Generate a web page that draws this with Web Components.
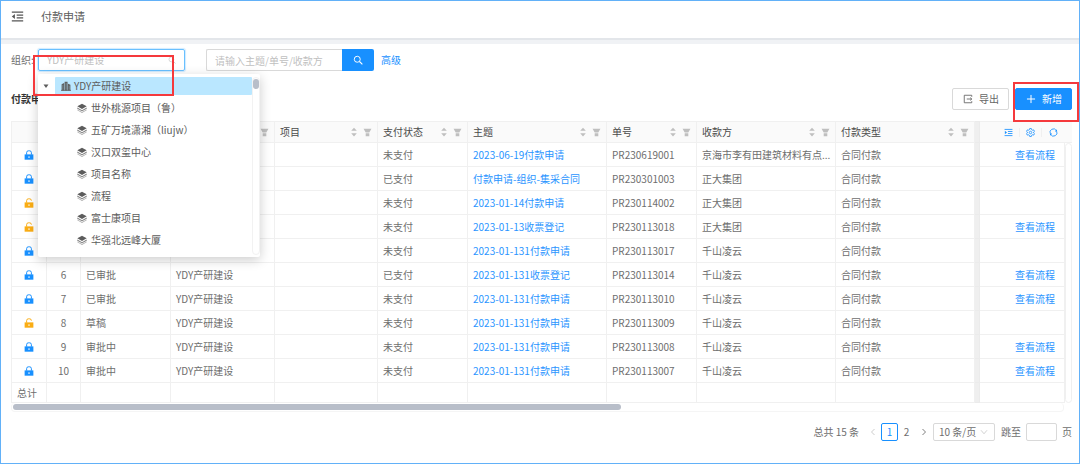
<!DOCTYPE html>
<html lang="zh-CN">
<head>
<meta charset="utf-8">
<meta name="viewport" content="width=device-width, initial-scale=1">
<title>付款申请</title>
<style>
  body {
    margin: 0;
    font: 10px/16px "Noto Sans CJK SC", "Open Sans", sans-serif;
    color: #6e6e6e;
    background: #fff;
  }
</style>
</head>
<body>
<payment-page></payment-page>

<script>
const ICONS = {
  fold: '<path d="M1 2.5h14M7 6.2h8M7 9.8h8M1 13.5h14" fill="none" stroke="currentColor" stroke-width="1.5"/><path d="M4.8 5v6L1 8z"/>',
  search: '<circle cx="6.8" cy="6.8" r="4.8" fill="none" stroke="currentColor" stroke-width="1.5"/><path d="M10.4 10.4l4.6 4.6" stroke="currentColor" stroke-width="1.7"/>',
  lock: '<path d="M1 7h14v8.5H1z"/><path d="M4.200 7.500V4.200Q4.200 1.300 7 1.300h2q2.800 0 2.800 2.900v3.300" fill="none" stroke="currentColor" stroke-width="1.600"/><path d="M7.200 9.800h1.600v2.900H7.200z" fill="#fff"/>',
  unlock: '<path d="M1 7h14v8.500H1z"/><path d="M4.200 7.500V4.200Q4.200 1.300 7 1.300h2q2.800 0 2.800 2.900" fill="none" stroke="currentColor" stroke-width="1.600"/><path d="M7.200 9.800h1.600v2.900H7.200z" fill="#fff"/>',
  filter: '<path d="M1 1.500h14L11.200 8H4.800zM4.800 9.500h6.400v5H4.800z"/>',
  sort: '<path d="M8 1l4.500 5h-9zM8 15l4.500-5h-9z"/>',
  building: '<path d="M1 5l4-2v12H1zM5.800 1h4.700v14H5.800zM11.200 4.500L15 6v9h-3.800z"/><path d="M0 14.200h16V15.500H0z"/><path d="M3 6v8M8.200 3v11M13.100 7.500V14" stroke="#9cc5d8" stroke-width=".7"/>',
  layers: '<path d="M8 1l7.500 4.300L8 9.600.5 5.300z"/><path d="M.5 7.300L8 11.600l7.500-4.300v1.800L8 13.300.5 9.100z" opacity=".8"/><path d="M.5 10.200L8 14.400l7.500-4.200v1.400L8 15.800.5 11.600z" opacity=".5"/>',
  caret: '<path d="M3 5h10l-5 7z"/>',
  plus: '<path d="M8 1.500v13M1.500 8h13" stroke="currentColor" stroke-width="1.600"/>',
  exportBox: '<path d="M14 4.500V2H2v12h12v-2.500M6 8h8M11.500 5.800L14 8l-2.500 2.200" fill="none" stroke="currentColor" stroke-width="1.400"/>',
  indent: '<path d="M1 2.500h14M7 6.200h8M7 9.800h8M1 13.500h14" fill="none" stroke="currentColor" stroke-width="1.500"/><path d="M1.500 5v6l3.800-3z"/>',
  gear: '<path d="M6.500 1h3l.5 2 1.500.9 2-.6L15 6l-1.500 1.300v1.400L15 10l-1.500 2.700-2-.6-1.500.9-.5 2h-3L6 13l-1.500-.9-2 .6L1 10l1.500-1.300V7.300L1 6l1.500-2.700 2 .6L6 3z" fill="none" stroke="currentColor" stroke-width="1.500"/><circle cx="8" cy="8" r="2.200" fill="none" stroke="currentColor" stroke-width="1.400"/>',
  reload: '<path d="M2.300 10A6 6 0 0 1 13 4.600M13.700 6A6 6 0 0 1 3 11.400" fill="none" stroke="currentColor" stroke-width="1.500"/><path d="M14.200 2.200v4h-3.800zM1.800 13.800v-4h3.800z"/>',
  left: '<path d="M11 2L5 8l6 6" fill="none" stroke="currentColor" stroke-width="1.600"/>',
  right: '<path d="M5 2l6 6-6 6" fill="none" stroke="currentColor" stroke-width="1.800"/>',
  down: '<path d="M2 4.500l6 7 6-7" fill="none" stroke="currentColor" stroke-width="1.400"/>'
};

class UiIcon extends HTMLElement {
  connectedCallback() {
    if (this.shadowRoot) return;
    this.attachShadow({ mode: 'open' });
    this.shadowRoot.innerHTML = `
      <style>
        :host { display: inline-block; flex: none; width: 10px; height: 10px; }
        svg { display: block; width: 100%; height: 100%; fill: currentColor; }
      </style>
      <svg viewBox="0 0 16 16" aria-hidden="true">${ICONS[this.getAttribute('name')]}</svg>
    `;
  }
}

class PageHeader extends HTMLElement {
  constructor() {
    super();
    this.attachShadow({ mode: 'open' });
    this.shadowRoot.innerHTML = `
      <style>
        :host { display: block; }
        header { display: flex; align-items: center; gap: 17px; height: 30px; padding: 0 10px 7px; }
        button { display: flex; padding: 0; border: 0; background: none; color: #555; }
        ui-icon { width: 13px; height: 13px; }
        h1 { margin: 0; font-size: 11px; font-weight: 400; line-height: 16px; color: #5c5c5c; }
        .band { height: 4px; border-top: 2px solid #e3e6ea; background: #f0f2f5; }
      </style>
      <header>
        <button type="button" aria-label="收起菜单"><ui-icon name="fold"></ui-icon></button>
        <h1><slot></slot></h1>
      </header>
      <div class="band"></div>
    `;
  }
}

class UiButton extends HTMLElement {
  constructor() {
    super();
    this.attachShadow({ mode: 'open' });
    this.shadowRoot.innerHTML = `
      <style>
        :host { display: block; }
        button {
          display: flex; align-items: center; justify-content: center; gap: 6px;
          box-sizing: border-box; height: 22px; padding: 0 9px 0 10px;
          border: 1px solid #d9d9d9; border-radius: 2px;
          background: #fff; color: #666; font: inherit;
        }
        :host([primary]) button { border-color: #1890ff; background: #1890ff; color: #fff; }
      </style>
      <button type="button"><slot></slot></button>
    `;
  }
}

class OrgTree extends HTMLElement {
  constructor() {
    super();
    const items = ['世外桃源项目（鲁）', '五矿万境潇湘（liujw）', '汉口双玺中心', '项目名称', '流程', '富士康项目', '华强北远峰大厦'];
    this.attachShadow({ mode: 'open' });
    this.shadowRoot.innerHTML = `
      <style>
        :host {
          display: flex; box-sizing: border-box; padding: 3px 0 2px 4px;
          background: #fff; border-radius: 2px; color: #5c5c5c;
          box-shadow: 0 3px 12px rgba(0, 0, 0, .2);
        }
        ul { flex: 1; margin: 0; padding: 0; list-style: none; }
        li { display: flex; align-items: center; height: 18px; margin-bottom: 4px; }
        li:last-child { margin-bottom: 6px; }
        .caret { width: 8px; height: 8px; margin-right: 5px; }
        .root { flex: 1; display: flex; align-items: center; gap: 3px; height: 18px; padding-left: 6px; border-radius: 1px; background: #bae7ff; }
        .child { padding-left: 35px; gap: 4px; }
        .bar { box-sizing: border-box; width: 8px; padding-top: 1px; border: 1px solid #f2f2f2; border-radius: 4px; }
        .bar i { display: block; height: 10px; border-radius: 3px; background: #b8bec9; }
      </style>
      <ul role="tree">
        <li role="treeitem" aria-selected="true"><ui-icon class="caret" name="caret"></ui-icon><span class="root"><ui-icon name="building"></ui-icon>YDY产研建设</span></li>
        ${items.map(t => `<li class="child" role="treeitem"><ui-icon name="layers"></ui-icon><span>${t}</span></li>`).join('')}
      </ul>
      <div class="bar"><i></i></div>
    `;
  }
}

class OrgSelect extends HTMLElement {
  constructor() {
    super();
    this.attachShadow({ mode: 'open' });
    this.shadowRoot.innerHTML = `
      <style>
        :host { display: flex; align-items: center; }
        label { width: 27px; white-space: nowrap; }
        .field { position: relative; width: 147px; }
        .box {
          display: flex; align-items: center; box-sizing: border-box; height: 22px; padding: 0 8px;
          border: 1px solid #69c0ff; border-radius: 2px; box-shadow: 0 0 1px 1px #cfeaff; color: #ccc;
        }
        input { flex: 1; min-width: 0; padding: 0; border: 0; outline: 0; background: none; font: inherit; color: #555; }
        input::placeholder { color: #bfbfbf; }
        ui-icon { width: 8px; height: 8px; }
        org-tree { position: absolute; z-index: 2; top: 25px; left: 0; width: 222px; }
        .mark { position: absolute; z-index: 3; top: 6px; left: -5px; box-sizing: border-box; width: 141px; height: 41px; border: 2px solid #f5393c; pointer-events: none; }
      </style>
      <label for="org">组织:</label>
      <div class="field">
        <div class="box"><input id="org" placeholder="YDY产研建设"><ui-icon name="search"></ui-icon></div>
        <org-tree></org-tree>
        <div class="mark"></div>
      </div>
    `;
  }
}

class SearchBox extends HTMLElement {
  constructor() {
    super();
    this.attachShadow({ mode: 'open' });
    this.shadowRoot.innerHTML = `
      <style>
        :host { display: flex; align-items: center; }
        input {
          box-sizing: border-box; width: 136px; height: 22px; padding: 0 8px; outline: 0;
          border: 1px solid #d9d9d9; border-right: 0; border-radius: 2px 0 0 2px; font: inherit;
        }
        input::placeholder { color: #bfbfbf; }
        button { display: flex; align-items: center; justify-content: center; width: 32px; height: 22px; padding: 0; border: 0; border-radius: 0 2px 2px 0; background: #1890ff; color: #fff; }
        a { margin-left: 7px; color: #1890ff; text-decoration: none; }
      </style>
      <input aria-label="搜索" placeholder="请输入主题/单号/收款方">
      <button type="button" aria-label="搜索"><ui-icon name="search"></ui-icon></button>
      <a href="#">高级</a>
    `;
  }
}

// lock, no., approval, org, project, pay state, subject, code, payee, type, has flow link
const ROWS = [
  ['lock', '', '', '', '', '未支付', '2023-06-19付款申请', 'PR230619001', '京海市李有田建筑材料有点...', '合同付款', 1],
  ['lock', '', '', '', '', '已支付', '付款申请-组织-集采合同', 'PR230301003', '正大集团', '合同付款', 0],
  ['unlock', '', '', '', '', '未支付', '2023-01-14付款申请', 'PR230114002', '正大集团', '合同付款', 0],
  ['unlock', '', '', '', '', '未支付', '2023-01-13收票登记', 'PR230113018', '正大集团', '合同付款', 1],
  ['lock', '', '', '', '', '未支付', '2023-01-131付款申请', 'PR230113017', '千山凌云', '合同付款', 0],
  ['lock', '6', '已审批', 'YDY产研建设', '', '已支付', '2023-01-131收票登记', 'PR230113014', '千山凌云', '合同付款', 1],
  ['lock', '7', '已审批', 'YDY产研建设', '', '未支付', '2023-01-131付款申请', 'PR230113010', '千山凌云', '合同付款', 1],
  ['unlock', '8', '草稿', 'YDY产研建设', '', '未支付', '2023-01-131付款申请', 'PR230113009', '千山凌云', '合同付款', 0],
  ['lock', '9', '审批中', 'YDY产研建设', '', '未支付', '2023-01-131付款申请', 'PR230113008', '千山凌云', '合同付款', 1],
  ['lock', '10', '审批中', 'YDY产研建设', '', '未支付', '2023-01-131付款申请', 'PR230113007', '千山凌云', '合同付款', 1]
];
const WIDTHS = [35, 34, 90, 104, 103, 90, 139, 90, 139, 139, 5, 85];
const HEADS = ['', '项目', '支付状态', '主题', '单号', '收款方', '付款类型'];

class PaymentTable extends HTMLElement {
  constructor() {
    super();
    this.attachShadow({ mode: 'open' });
    this.shadowRoot.innerHTML = `
      <style>
        :host { display: block; }
        .wrap { display: flex; }
        table { flex: 1; min-width: 0; width: 100%; border-collapse: separate; border-spacing: 0; table-layout: fixed; border-left: 1px solid #f0f0f0; }
        th, td { box-sizing: border-box; padding: 0 5px; border: solid #f0f0f0; border-width: 0 1px 1px 0; text-align: left; font-weight: 400; white-space: nowrap; overflow: hidden; }
        th { height: 22px; border-top-width: 1px; background: #fafafa; color: #4a4a4a; }
        td { height: 24px; }
        tfoot td { height: 20px; overflow: visible; }
        .head { display: flex; align-items: center; gap: 4px; }
        .head span { flex: 1; }
        .head ui-icon { color: #bfbfbf; }
        .head ui-icon[name=filter] { width: 9px; height: 9px; }
        .num { text-align: center; padding: 0; }
        td ui-icon { display: block; margin: auto; color: #1890ff; }
        td ui-icon[name=unlock] { color: #faad14; }
        a { color: #2b95ff; text-decoration: none; }
        .edge { padding: 0; background: #efefef; border-color: #ebebeb; }
        .flow { text-align: right; padding-right: 9px; }
        .tools { display: flex; justify-content: flex-end; }
        th.tool-cell { padding-right: 1px; border-right: 0; }
        .tools button { display: flex; justify-content: center; width: 22px; padding: 0; border: 0; border-right: 1px solid #f0f0f0; background: none; color: #1890ff; }
        .tools button:last-child { border: 0; }
        .tools ui-icon { width: 9px; height: 9px; }
        .gutter { display: flex; flex-direction: column; width: 8px; }
        .cap { box-sizing: border-box; height: 22px; border: solid #f0f0f0; border-width: 1px 0; background: #fafafa; }
        .track { flex: 1; border: 1px solid #f0f0f0; border-radius: 4px; }
        .scroll { box-sizing: border-box; height: 9px; margin-right: 8px; padding: 1px 1px 0; border: solid #f5f5f5; border-width: 0 1px 1px; border-radius: 4px; }
        .scroll i { display: block; width: 58%; height: 6px; border-radius: 3px; background: #b8bec9; }
      </style>
      <div class="wrap">
        <table>
          <colgroup>${WIDTHS.map(w => `<col style="width:${w}px">`).join('')}</colgroup>
          <thead><tr>
            <th></th><th></th><th></th>
            ${HEADS.map(h => `<th><div class="head"><span>${h}</span><ui-icon name="sort"></ui-icon><ui-icon name="filter"></ui-icon></div></th>`).join('')}
            <th class="edge"></th>
            <th class="tool-cell"><div class="tools">
              <button type="button" aria-label="密度"><ui-icon name="indent"></ui-icon></button>
              <button type="button" aria-label="设置"><ui-icon name="gear"></ui-icon></button>
              <button type="button" aria-label="刷新"><ui-icon name="reload"></ui-icon></button>
            </div></th>
          </tr></thead>
          <tbody>${ROWS.map(r => this._row(r)).join('')}</tbody>
          <tfoot><tr><td>总计</td>${'<td></td>'.repeat(9)}<td class="edge"></td><td></td></tr></tfoot>
        </table>
        <div class="gutter"><div class="cap"></div><div class="track"></div></div>
      </div>
      <div class="scroll"><i></i></div>
    `;
  }

  _row([lock, no, state, org, project, pay, subject, code, payee, type, flow]) {
    return `<tr>
      <td><ui-icon name="${lock}"></ui-icon></td>
      <td class="num">${no}</td>
      <td>${state}</td>
      <td>${org}</td>
      <td>${project}</td>
      <td>${pay}</td>
      <td><a href="#">${subject}</a></td>
      <td>${code}</td>
      <td>${payee}</td>
      <td>${type}</td>
      <td class="edge"></td>
      <td class="flow">${flow ? '<a href="#">查看流程</a>' : ''}</td>
    </tr>`;
  }
}

class PagePager extends HTMLElement {
  constructor() {
    super();
    this.attachShadow({ mode: 'open' });
    this.shadowRoot.innerHTML = `
      <style>
        :host { display: flex; justify-content: flex-end; align-items: center; }
        button { display: flex; align-items: center; justify-content: center; box-sizing: border-box; width: 17px; height: 18px; padding: 0; border: 0; background: none; font: inherit; color: inherit; }
        ui-icon { width: 8px; height: 8px; }
        .prev { color: #bfbfbf; margin-left: 5px; }
        .current { border: 1px solid #1890ff; border-radius: 2px; color: #1890ff; }
        .size { display: grid; align-items: center; margin: 0 6px 0 1px; }
        .size > * { grid-area: 1 / 1; }
        .size ui-icon { justify-self: end; margin-right: 7px; color: #bfbfbf; pointer-events: none; }
        select, input { box-sizing: border-box; height: 18px; padding: 0 5px; border: 1px solid #d9d9d9; border-radius: 2px; background: #fff; font: inherit; color: inherit; }
        select { appearance: none; width: 62px; }
        label { display: flex; align-items: center; gap: 5px; }
        input { width: 31px; }
      </style>
      <span>总共 15 条</span>
      <button type="button" class="prev" aria-label="上一页"><ui-icon name="left"></ui-icon></button>
      <button type="button" class="current">1</button>
      <button type="button">2</button>
      <button type="button" aria-label="下一页"><ui-icon name="right"></ui-icon></button>
      <span class="size"><select aria-label="每页条数"><option>10 条/页</option></select><ui-icon name="down"></ui-icon></span>
      <label>跳至 <input> 页</label>
    `;
  }
}

class PaymentPage extends HTMLElement {
  constructor() {
    super();
    this.attachShadow({ mode: 'open' });
    this.shadowRoot.innerHTML = `
      <style>
        :host { display: block; box-sizing: border-box; min-height: 100vh; border: 1px solid #62b1f8; }
        main { padding: 5px 7px 10px 10px; }
        .filters { display: flex; gap: 21px; }
        .title { display: flex; align-items: center; gap: 6px; margin: 17px 0 11px; }
        h2 { flex: 1; margin: 0; font-size: 10px; font-weight: 700; color: #333; }
        .marked { position: relative; }
        .mark { position: absolute; inset: -6px -7px -12px -2px; border: 2px solid #f5393c; pointer-events: none; }
        page-pager { margin-top: 11px; }
      </style>
      <page-header>付款申请</page-header>
      <main>
        <div class="filters"><org-select></org-select><search-box></search-box></div>
        <div class="title">
          <h2>付款申请</h2>
          <ui-button><ui-icon name="exportBox"></ui-icon>导出</ui-button>
          <div class="marked">
            <ui-button primary><ui-icon name="plus"></ui-icon>新增</ui-button>
            <div class="mark"></div>
          </div>
        </div>
        <payment-table></payment-table>
        <page-pager></page-pager>
      </main>
    `;
  }
}

customElements.define('ui-icon', UiIcon);
customElements.define('page-header', PageHeader);
customElements.define('ui-button', UiButton);
customElements.define('org-tree', OrgTree);
customElements.define('org-select', OrgSelect);
customElements.define('search-box', SearchBox);
customElements.define('payment-table', PaymentTable);
customElements.define('page-pager', PagePager);
customElements.define('payment-page', PaymentPage);
</script>
</body>
</html>
